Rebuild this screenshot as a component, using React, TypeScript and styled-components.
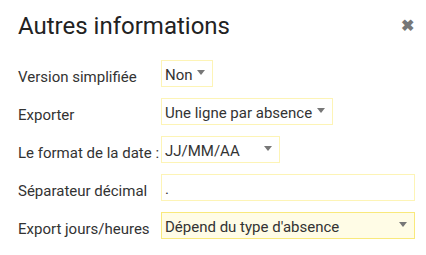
import React from "react";
import styled, { createGlobalStyle } from "styled-components";

const Global = createGlobalStyle`
  html, body { margin: 0; padding: 0; background: #fff; }
  body { font-family: Roboto, "Noto Sans", sans-serif; color: #333; }
`;

const Dialog = styled.div`
  width: 426px;
  height: 255px;
  box-sizing: border-box;
  padding: 9px 11px 0 18px;
`;

const Header = styled.div`
  display: flex;
  align-items: center;
  justify-content: space-between;
  height: 34px;
  margin-bottom: 17px;
`;

const Title = styled.h1`
  margin: 0;
  font-size: 24px;
  font-weight: 400;
  color: #222;
  letter-spacing: 0;
`;

const Close = styled.span`
  font-size: 16px;
  font-weight: 700;
  color: #777;
  margin-right: 1px;
  line-height: 1;
`;

const Form = styled.div`
  display: grid;
  grid-template-columns: 143px 1fr;
  row-gap: 11px;
  align-items: center;
`;

const Label = styled.label`
  font-size: 15px;
  color: #333;
  white-space: nowrap;
  padding-top: 7px;
`;

const Field = styled.div<{ $w?: number; $focus?: boolean }>`
  box-sizing: border-box;
  height: 27px;
  width: ${(p) => (p.$w ? `${p.$w}px` : "254px")};
  border: 1px solid ${(p) => (p.$focus ? "#f9e97c" : "#fdf4b6")};
  background: ${(p) => (p.$focus ? "#fffce6" : "#fff")};
  display: flex;
  align-items: center;
  justify-content: space-between;
  padding: 2px 7px 0 3px;
  font-size: 15px;
  color: #333;
`;

const Arrow = styled.span`
  width: 0;
  height: 0;
  border-left: 4px solid transparent;
  border-right: 4px solid transparent;
  border-top: 5px solid #777;
  margin-bottom: 4px;
`;

export default function App() {
  return (
    <>
      <Global />
      <Dialog>
        <Header>
          <Title>Autres informations</Title>
          <Close>✖</Close>
        </Header>
        <Form>
          <Label>Version simplifiée</Label>
          <Field $w={52}>
            Non <Arrow />
          </Field>
          <Label>Exporter</Label>
          <Field $w={172}>
            Une ligne par absence <Arrow />
          </Field>
          <Label>Le format de la date :</Label>
          <Field $w={119}>
            JJ/MM/AA <Arrow />
          </Field>
          <Label>Séparateur décimal</Label>
          <Field>.</Field>
          <Label>Export jours/heures</Label>
          <Field $focus>
            Dépend du type d'absence <Arrow />
          </Field>
        </Form>
      </Dialog>
    </>
  );
}
